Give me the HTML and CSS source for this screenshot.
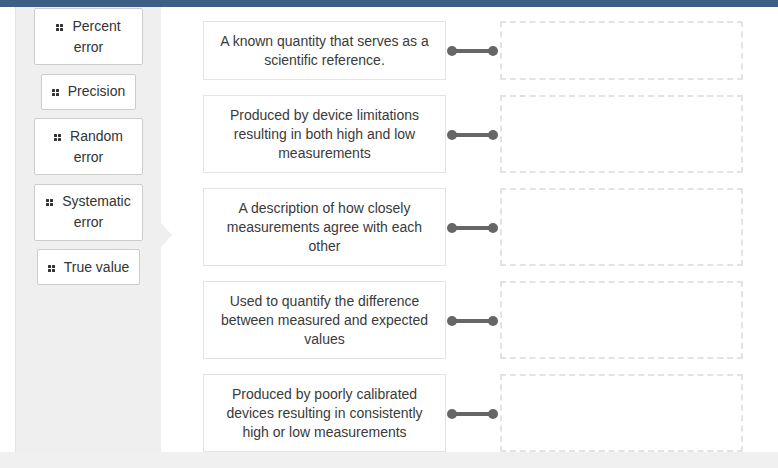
FILE: index.html
```html
<!DOCTYPE html>
<html>
<head>
<meta charset="utf-8">
<link rel="stylesheet" href="styles.css">
</head>
<body>
<div class="topbar"></div>
<div class="main">
  <div class="bank">
    <div class="tile"><svg class="grip" width="7" height="7" viewBox="0 0 7 7"><rect x="0" y="0" width="3" height="3" rx="0.5"/><rect x="4" y="0" width="3" height="3" rx="0.5"/><rect x="0" y="4" width="3" height="3" rx="0.5"/><rect x="4" y="4" width="3" height="3" rx="0.5"/></svg>Percent error</div>
    <div class="tile"><svg class="grip" width="7" height="7" viewBox="0 0 7 7"><rect x="0" y="0" width="3" height="3" rx="0.5"/><rect x="4" y="0" width="3" height="3" rx="0.5"/><rect x="0" y="4" width="3" height="3" rx="0.5"/><rect x="4" y="4" width="3" height="3" rx="0.5"/></svg>Precision</div>
    <div class="tile"><svg class="grip" width="7" height="7" viewBox="0 0 7 7"><rect x="0" y="0" width="3" height="3" rx="0.5"/><rect x="4" y="0" width="3" height="3" rx="0.5"/><rect x="0" y="4" width="3" height="3" rx="0.5"/><rect x="4" y="4" width="3" height="3" rx="0.5"/></svg>Random error</div>
    <div class="tile"><svg class="grip" width="7" height="7" viewBox="0 0 7 7"><rect x="0" y="0" width="3" height="3" rx="0.5"/><rect x="4" y="0" width="3" height="3" rx="0.5"/><rect x="0" y="4" width="3" height="3" rx="0.5"/><rect x="4" y="4" width="3" height="3" rx="0.5"/></svg>Systematic error</div>
    <div class="tile"><svg class="grip" width="7" height="7" viewBox="0 0 7 7"><rect x="0" y="0" width="3" height="3" rx="0.5"/><rect x="4" y="0" width="3" height="3" rx="0.5"/><rect x="0" y="4" width="3" height="3" rx="0.5"/><rect x="4" y="4" width="3" height="3" rx="0.5"/></svg>True value</div>
  </div>
  <div class="matches">
    <div class="prompt">A known quantity that serves as a scientific reference.</div>
    <svg class="link" width="54" height="12" viewBox="0 0 54 12"><line x1="6" y1="6" x2="47" y2="6"/><circle cx="6" cy="6" r="5"/><circle cx="47" cy="6" r="5"/></svg>
    <div class="drop"></div>

    <div class="prompt">Produced by device limitations resulting in both high and low measurements</div>
    <svg class="link" width="54" height="12" viewBox="0 0 54 12"><line x1="6" y1="6" x2="47" y2="6"/><circle cx="6" cy="6" r="5"/><circle cx="47" cy="6" r="5"/></svg>
    <div class="drop"></div>

    <div class="prompt">A description of how closely measurements agree with each other</div>
    <svg class="link" width="54" height="12" viewBox="0 0 54 12"><line x1="6" y1="6" x2="47" y2="6"/><circle cx="6" cy="6" r="5"/><circle cx="47" cy="6" r="5"/></svg>
    <div class="drop"></div>

    <div class="prompt">Used to quantify the difference between measured and expected values</div>
    <svg class="link" width="54" height="12" viewBox="0 0 54 12"><line x1="6" y1="6" x2="47" y2="6"/><circle cx="6" cy="6" r="5"/><circle cx="47" cy="6" r="5"/></svg>
    <div class="drop"></div>

    <div class="prompt">Produced by poorly calibrated devices resulting in consistently high or low measurements</div>
    <svg class="link" width="54" height="12" viewBox="0 0 54 12"><line x1="6" y1="6" x2="47" y2="6"/><circle cx="6" cy="6" r="5"/><circle cx="47" cy="6" r="5"/></svg>
    <div class="drop"></div>
  </div>
</div>
<div class="footer"></div>
</body>
</html>
```
FILE: styles.css
```css
html, body {
  margin: 0;
  padding: 0;
  background: #ffffff;
  overflow: hidden;
  height: 468px;
}
body {
  font-family: "Liberation Sans", Arial, sans-serif;
  font-size: 14px;
  color: #333333;
}
.topbar {
  height: 7px;
  background: #3e5e86;
}
.main {
  display: flex;
  align-items: flex-start;
  padding-left: 15px;
}
.bank {
  position: relative;
  width: 146px;
  min-height: 470px;
  background: #efefef;
  border-left: 1px solid #e2e2e2;
  display: flex;
  flex-direction: column;
  align-items: center;
  gap: 8.5px;
  padding-top: 1px;
  box-sizing: border-box;
}
.bank::after {
  content: "";
  position: absolute;
  right: -11px;
  top: 216px;
  border-top: 12px solid transparent;
  border-bottom: 12px solid transparent;
  border-left: 11px solid #efefef;
}
.tile {
  max-width: 109px;
  box-sizing: border-box;
  background: #ffffff;
  border: 1px solid #cccccc;
  border-radius: 2px;
  padding: 6.5px 10px;
  line-height: 21px;
  text-align: center;
  color: #333333;
}
.grip {
  fill: #333333;
  margin-right: 9px;
  vertical-align: 0;
}
.matches {
  margin-left: 42px;
  padding-top: 14px;
  display: grid;
  grid-template-columns: 243px 54px 243px;
  row-gap: 15px;
}
.prompt {
  border: 1px solid #e3e3e3;
  padding: 9.5px 14px;
  line-height: 19px;
  text-align: center;
  color: #3a3a3a;
}
.link {
  align-self: center;
  margin-top: 1px;
}
.link line {
  stroke: #666666;
  stroke-width: 4;
}
.link circle {
  fill: #666666;
}
.drop {
  border: 2px dashed #e3e3e3;
}
.footer {
  position: fixed;
  left: 0;
  right: 0;
  bottom: 0;
  height: 16px;
  background: #f0f0f0;
}
```
